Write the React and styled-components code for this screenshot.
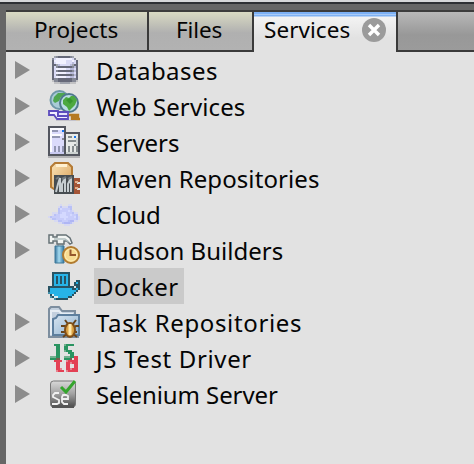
import React from "react";
import styled, { createGlobalStyle } from "styled-components";

const GlobalStyle = createGlobalStyle`
  * { box-sizing: border-box; }
  body { margin: 0; background: #e2e2e2; overflow: hidden; }
`;

const Window = styled.div`
  width: 474px;
  height: 464px;
  display: flex;
  flex-direction: column;
  background: #666;
  color: #050505;
  font-family: "Noto Sans", "Open Sans", sans-serif;
  overflow: hidden;
`;

const TopEdge = styled.div`
  flex: none;
  height: 10px;
  border-top: 2px solid #d6d7d9;
  background: linear-gradient(#2e3034 0 2px, #666 2px);
`;

const Panel = styled.div`
  flex: 1;
  margin-left: 6px;
  display: flex;
  flex-direction: column;
  background: #e2e2e2;
`;

const TabBar = styled.div`
  flex: none;
  height: 42px;
  display: flex;
`;

const Tab = styled.div`
  width: ${(p) => p.$width}px;
  padding: 0 0 3px ${(p) => p.$inset}px;
  display: flex;
  align-items: center;
  font-size: 22.5px;
  letter-spacing: ${(p) => p.$spacing}px;
  white-space: nowrap;
  border-top: 2px solid #3c3c3c;
  border-right: 2px solid #3a3a3a;
  border-bottom: 2px solid #3a3a3a;
  background: linear-gradient(#d9dac3, #b0b0b0 55%, #b2b2b2);
`;

const ActiveTab = styled(Tab)`
  padding-bottom: 5px;
  border-bottom: 0;
  background: linear-gradient(#7db1f5 0 2px, #a9cbf8 2px 3px, #7fb2f4 3px 4px, #f3f3f3 5px, #e2e2e2 26px);
`;

const TabFiller = styled.div`
  flex: 1;
  border-top: 2px solid #3c3c3c;
  border-bottom: 2px solid #3a3a3a;
  background: linear-gradient(#b8b8b8, #989898 60%, #9b9b9b);
`;

const CloseIcon = styled.svg`
  width: 24px;
  height: 24px;
  margin-left: auto;
  margin-right: 10px;
  flex: none;
`;

const Tree = styled.div`
  display: flex;
  flex-direction: column;
`;

const Row = styled.div`
  height: 36px;
  display: flex;
  align-items: center;
`;

const Expander = styled.svg`
  width: 15px;
  height: 18px;
  margin: 0 18px 0 9px;
  flex: none;
  visibility: ${(p) => (p.$hidden ? "hidden" : "visible")};
`;

const IconBox = styled.svg`
  width: 32px;
  height: 32px;
  flex: none;
`;

const Label = styled.div`
  height: 36px;
  margin-left: 14px;
  padding: 0 5px 0 2px;
  font-size: 24px;
  line-height: 37px;
  letter-spacing: ${(p) => p.$spacing}px;
  white-space: nowrap;
  background: ${(p) => (p.$selected ? "#cacaca" : "transparent")};
`;

/* 16x16 bitmap icon: one character per pixel, looked up in the palette. */
function Bitmap({ rows, colors }) {
  return (
    <IconBox viewBox="0 0 16 16" shapeRendering="crispEdges">
      {rows.flatMap((row, y) =>
        [...row].map((c, x) =>
          colors[c] ? <rect key={`${x}-${y}`} x={x} y={y} width="1" height="1" fill={colors[c]} /> : null
        )
      )}
    </IconBox>
  );
}

const DatabaseIcon = () => (
  <Bitmap
    colors={{ k: "#666979", g: "#a0a4ae", h: "#858996", w: "#f1f1ff", l: "#d9daf5", b: "#b8badb", s: "#c2c2c4" }}
    rows={[
      "................",
      "...ghkkkkkkhg...",
      "..hlwwwwwwwwlh..",
      "..kwwwwwwlllwlk.",
      "..klwwwwwlllblk.",
      "..kkgblllllbgkk.",
      "..klhkkkkkkkhbk.",
      "..klwwwwwllbblk.",
      "..klhkkkkkkkhbk.",
      "..klwwwwwllbblk.",
      "..klhkkkkkkkhbk.",
      "..klwwwwwllbblk.",
      "..khhkkkkkkkhhk.",
      "..shhkkkkkkkhhs.",
      "...sssgggggsss..",
      "................",
    ]}
  />
);

const WebServicesIcon = () => (
  <IconBox viewBox="0 0 32 32">
    <circle cx="11.5" cy="10" r="9" fill="#a9cbd7" stroke="#6f97a9" strokeWidth="2" />
    <path d="M6 7l4-4h7l1 3-5 1-2 4-4 2-2-2z" fill="#4fa650" />
    <circle cx="21" cy="13" r="9" fill="#b9dce4" stroke="#4f788d" strokeWidth="2" />
    <path d="M15 10l3-3 3 1 2-2h3l3 4-2 5-3 3-3 3-2-4-4-3z" fill="#4ca940" />
    <path d="M18 10l4-2 3 3-3 3z" fill="#36962f" />
    <path d="M1 21h9v5h10v3H9l-3-4H1z" fill="#f2f0ff" stroke="#5c4cbd" strokeWidth="1.8" />
    <path d="M10 22h10v4H10z" fill="#e3e1fb" stroke="#5c4cbd" strokeWidth="1.8" />
    <path d="M21 25h9v2h-6v2h8" fill="none" stroke="#b57a23" strokeWidth="2.4" />
    <path d="M8 30.5h20" stroke="#c4c3cb" />
  </IconBox>
);

const ServersIcon = () => (
  <Bitmap
    colors={{ k: "#53565f", g: "#858894", w: "#fbfbff", l: "#dbdbfb", v: "#c9caf1", r: "#e7eae8", q: "#ccd2d1", d: "#9296b2", m: "#868d8f", b: "#1676ed", s: "#b3b3b5" }}
    rows={[
      "kkkkkkkkk.......",
      "kwwwwwwwk.......",
      "kwdddllbk.......",
      "kwllllllkkkkkkkk",
      "kwwwwwwlkrrrrrrk",
      "kwddddllkrmmrbrk",
      "kwlllllgkrrrrrqk",
      "kwllllllkrmmmmqk",
      "kwllllllkrrrrrqk",
      "kwllllllkrrrrmqk",
      "kwldldldkrmrmrmk",
      "kwldldldkrmrmrmk",
      "kwldldldkrmrmrmk",
      "kvvvvvvvkqqqqqqk",
      "kkkkkkkkkkkkkkkk",
      "ssssssssssssssss",
    ]}
  />
);

const MavenIcon = () => (
  <IconBox viewBox="0 0 32 32">
    <defs>
      <linearGradient id="jar" x1="0" y1="0" x2="1" y2="1">
        <stop offset="0" stopColor="#fbe4b8" />
        <stop offset="1" stopColor="#d59d55" />
      </linearGradient>
    </defs>
    <path d="M7 1h13l4 4v22H6l-3-2V5z" fill="url(#jar)" stroke="#b57b35" strokeWidth="2" />
    <path d="M8 2h11v3H8z" fill="#fff0d0" />
    <path d="M26 16h6v4h-3v2h3v4h-3v2h3v4h-8V18z" fill="#a45537" />
    <path d="M27 20h3M27 26h3" stroke="#e0af8b" strokeWidth="2" />
    <path d="M6 13h20v19H6z" fill="#474d51" />
    <path d="M8 30l2-8 2-6v14M14 30V22l3-6v14M20 30V22l3-6v14" fill="none" stroke="#c6cdd0" strokeWidth="2" />
    <path d="M8 17l3-2M14 17l4-2M20 17l4-2" stroke="#737b80" strokeWidth="2" />
  </IconBox>
);

const CloudIcon = () => (
  <Bitmap
    colors={{ a: "#d7d9f2", l: "#c7ccfa", b: "#b9c1f6", w: "#d4d9ff", d: "#afb6f4" }}
    rows={[
      "................",
      "................",
      "................",
      "......a...aa....",
      ".....abaaabb....",
      ".....bwllllb....",
      ".....bllllwla...",
      "..aaablwwlllbaa.",
      "..abllwwwllwllb.",
      "abllllwwwwlllwba",
      ".abbllllwlllllba",
      "...aabblllbddaa.",
      ".....aabdddba...",
      "........aaa.....",
      "................",
      "................",
    ]}
  />
);

const HudsonIcon = () => (
  <IconBox viewBox="0 0 32 32">
    <defs>
      <linearGradient id="handle">
        <stop offset="0" stopColor="#3776a0" />
        <stop offset=".45" stopColor="#a6dbf0" />
        <stop offset="1" stopColor="#32749e" />
      </linearGradient>
    </defs>
    <path d="M10 8h5v5h-5z" fill="#c6ced1" stroke="#899398" />
    <path d="M7 12h9v17H7z" fill="url(#handle)" stroke="#3f7898" />
    <path d="M1 1h4v2h4V1h9l4 3 2 5-2 1-3-3h-3v3H9V7H5v2H1z" fill="#f2f5f3" stroke="#667176" strokeWidth="1.5" />
    <path d="M6 5h11l4 3" fill="none" stroke="#b1bec0" strokeWidth="1.5" />
    <circle cx="23" cy="21" r="8" fill="#f7dc91" stroke="#b17b30" strokeWidth="2" />
    <circle cx="23" cy="21" r="6" fill="none" stroke="#ffedb5" />
    <path d="M22.5 15.5V21H28" fill="none" stroke="#95572c" strokeWidth="2" />
  </IconBox>
);

const DockerIcon = () => (
  <Bitmap
    colors={{ k: "#285363", b: "#27b3e7", w: "#d9eef5", e: "#438fa9" }}
    rows={[
      "................",
      "..kkkkkkkkk.....",
      "..kbbbbbbbk.....",
      "..kbkbkbkbk.....",
      "..kbkbkbkbk.....",
      "..kbkbkbkbk...kk",
      "..kbkbkbkbk..kbk",
      "..kbbbbbbbk..kkk",
      "kkkkkkkkkkkkk.kk",
      "kbbbbbbbbbbbkkbk",
      "kbbbbbbbbbbbbbk.",
      "ebbbbbbbbbbbbk..",
      ".kwbbbbbbbbbk...",
      ".ekwwbbbbbkk....",
      "...ekkkkkk......",
      "................",
    ]}
  />
);

const TasksIcon = () => (
  <IconBox viewBox="0 0 32 32">
    <defs>
      <linearGradient id="folder" x1="0" y1="0" x2="1" y2="1">
        <stop offset="0" stopColor="#d8e5f0" />
        <stop offset="1" stopColor="#8eb2d1" />
      </linearGradient>
    </defs>
    <path d="M1 31V3l2-2h8l3 4h13v6h3v20z" fill="#c3d0de" stroke="#7d8e9f" strokeWidth="2" />
    <path d="M3 29V5h8l3 3h11" fill="none" stroke="#e6edf3" strokeWidth="2" />
    <path d="M5 29V13l3-1 2-3h21v20z" fill="url(#folder)" stroke="#5d7f9e" strokeWidth="2" />
    <path d="M17 14l3 4m8-4l-3 4m-12 2h4l3 2m11-2h-3l-3 2m-12 4h4m12 0h-4m-10 5l4-3m10 3l-4-3" stroke="#67441b" strokeWidth="2" />
    <ellipse cx="22" cy="24" rx="5" ry="7" fill="#dda344" stroke="#80501a" strokeWidth="2" />
    <path d="M22 18v11" stroke="#ffe9ac" strokeWidth="3" />
  </IconBox>
);

const TestDriverIcon = () => (
  <Bitmap
    colors={{ g: "#2a9461", h: "#72b18f", r: "#e34054", p: "#e8808d", k: "#765f4b" }}
    rows={[
      "................",
      "...ggg..hgggg...",
      "....gg..gg......",
      "....gg..gg......",
      "....gg..hggg....",
      "....gg....ggg...",
      "....gg.....gg...",
      ".hhhgg..hhhggrr.",
      ".gggkk..gggk.rr.",
      "...rrrr..prrrrr.",
      "....rr...rrprrr.",
      "....rr...rr..rr.",
      "....rr...rr..rr.",
      "....rrp..rrprrr.",
      "....prrr.prrrrr.",
      "................",
    ]}
  />
);

const SeleniumIcon = () => (
  <IconBox viewBox="0 0 32 32">
    <defs>
      <linearGradient id="selenium" x1="0" y1="0" x2="0" y2="1">
        <stop offset="0" stopColor="#d9d9d9" />
        <stop offset=".5" stopColor="#a1a1a1" />
        <stop offset="1" stopColor="#4d4d4d" />
      </linearGradient>
    </defs>
    <rect x="2.5" y="3" width="25" height="26" rx="3" fill="url(#selenium)" stroke="#777" />
    <path d="M4 29h22" stroke="#555" strokeWidth="2" />
    <path d="M11 15H7l-2 2v2l6 3v3l-2 1H4M14 21h6v-3l-2-1h-3l-1 2v5l2 2h4" fill="none" stroke="#f1f1f1" strokeWidth="1.8" />
    <path d="M13 9l5 5L27 3" fill="none" stroke="#35a52d" strokeWidth="3" />
  </IconBox>
);

const services = [
  { name: "Databases", icon: DatabaseIcon, spacing: 0.45 },
  { name: "Web Services", icon: WebServicesIcon, spacing: 0.13 },
  { name: "Servers", icon: ServersIcon, spacing: -0.05 },
  { name: "Maven Repositories", icon: MavenIcon, spacing: 0.1 },
  { name: "Cloud", icon: CloudIcon, spacing: -0.2 },
  { name: "Hudson Builders", icon: HudsonIcon, spacing: 0.02 },
  { name: "Docker", icon: DockerIcon, spacing: 0.45, selected: true, leaf: true },
  { name: "Task Repositories", icon: TasksIcon, spacing: 0.64 },
  { name: "JS Test Driver", icon: TestDriverIcon, spacing: 0.65 },
  { name: "Selenium Server", icon: SeleniumIcon, spacing: -0.1 },
];

export default function App() {
  return (
    <Window>
      <GlobalStyle />
      <TopEdge />
      <Panel>
        <TabBar>
          <Tab $width={143} $inset={28} $spacing={0}>Projects</Tab>
          <Tab $width={105} $inset={27} $spacing={-0.1}>Files</Tab>
          <ActiveTab $width={144} $inset={10} $spacing={0.05}>
            Services
            <CloseIcon viewBox="0 0 24 24">
              <circle cx="12" cy="12" r="12" fill="#9b9b9b" />
              <path d="M7 7l10 10M17 7L7 17" stroke="#fff" strokeWidth="3.4" />
            </CloseIcon>
          </ActiveTab>
          <TabFiller />
        </TabBar>
        <Tree>
          {services.map(({ name, icon: Icon, spacing, selected, leaf }) => (
            <Row key={name}>
              <Expander $hidden={leaf} viewBox="0 0 15 18">
                <path d="M0 0L15 9L0 18Z" fill="#8c8c8c" />
              </Expander>
              <Icon />
              <Label $spacing={spacing} $selected={selected}>{name}</Label>
            </Row>
          ))}
        </Tree>
      </Panel>
    </Window>
  );
}
